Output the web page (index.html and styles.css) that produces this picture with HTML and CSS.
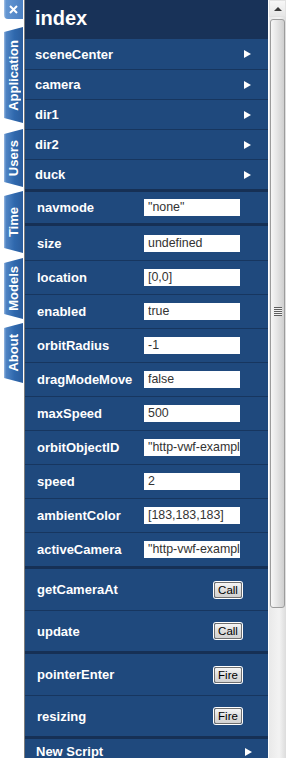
FILE: index.html
```html
<!DOCTYPE html>
<html lang="en">

<head>
    <meta charset="UTF-8">
    <meta name="viewport" content="width=device-width, initial-scale=1.0">
    <title>index</title>
    <link rel="stylesheet" href="styles.css">
</head>

<body>
    <div class="app">
        <nav class="tabs">
            <div class="tab tab-close">
                <svg width="9" height="9" viewBox="0 0 9 9">
                    <path d="M1 1 L8 8 M8 1 L1 8" stroke="#ffffff" stroke-width="2" fill="none" />
                </svg>
            </div>
            <div class="tab tab-application"><span>Application</span></div>
            <div class="tab tab-users"><span>Users</span></div>
            <div class="tab tab-time"><span>Time</span></div>
            <div class="tab tab-models"><span>Models</span></div>
            <div class="tab tab-about"><span>About</span></div>
        </nav>

        <main class="panel">
            <header class="panel-title">index</header>

            <section class="group">
                <div class="row nav-row"><span>sceneCenter</span><i class="arrow"></i></div>
                <div class="row nav-row"><span>camera</span><i class="arrow"></i></div>
                <div class="row nav-row"><span>dir1</span><i class="arrow"></i></div>
                <div class="row nav-row"><span>dir2</span><i class="arrow"></i></div>
                <div class="row nav-row"><span>duck</span><i class="arrow"></i></div>
            </section>

            <section class="group">
                <div class="row prop-row prop-first"><label>navmode</label><input type="text" value="&quot;none&quot;"></div>
            </section>

            <section class="group">
                <div class="row prop-row"><label>size</label><input type="text" value="undefined"></div>
                <div class="row prop-row"><label>location</label><input type="text" value="[0,0]"></div>
                <div class="row prop-row"><label>enabled</label><input type="text" value="true"></div>
                <div class="row prop-row"><label>orbitRadius</label><input type="text" value="-1"></div>
                <div class="row prop-row"><label>dragModeMove</label><input type="text" value="false"></div>
                <div class="row prop-row"><label>maxSpeed</label><input type="text" value="500"></div>
                <div class="row prop-row"><label>orbitObjectID</label><input type="text" value="&quot;http-vwf-example-com-camera&quot;"></div>
                <div class="row prop-row"><label>speed</label><input type="text" value="2"></div>
                <div class="row prop-row"><label>ambientColor</label><input type="text" value="[183,183,183]"></div>
                <div class="row prop-row"><label>activeCamera</label><input type="text" value="&quot;http-vwf-example-com-camera&quot;"></div>
            </section>

            <section class="group">
                <div class="row action-row"><span>getCameraAt</span><button>Call</button></div>
                <div class="row action-row"><span>update</span><button>Call</button></div>
            </section>

            <section class="group">
                <div class="row action-row"><span>pointerEnter</span><button>Fire</button></div>
                <div class="row action-row"><span>resizing</span><button>Fire</button></div>
            </section>

            <section class="group">
                <div class="row nav-row new-script"><span>New Script</span><i class="arrow"></i></div>
            </section>
        </main>

        <div class="scrollbar">
            <div class="scroll-up"><i class="scroll-tri"></i></div>
            <div class="scroll-thumb">
                <div class="grip"></div>
            </div>
        </div>
    </div>
</body>

</html>
```

FILE: styles.css
```css
:root {
    --header-color: #183258;
    --row-color: #1f497d;
    --line-color: #17365f;
    --group-line: #163055;
    --text-light: #ffffff;
    --input-text: #333333;
    --font-family: "Liberation Sans", Arial, sans-serif;
}

html,
body {
    margin: 0;
    padding: 0;
    background: #ffffff;
    overflow: hidden;
}

body {
    font-family: var(--font-family);
    width: 286px;
    height: 758px;
}

.app {
    display: flex;
    height: 758px;
}

/* Left tabs */

.tabs {
    width: 24px;
    flex: none;
    display: flex;
    flex-direction: column;
    align-items: flex-start;
}

.tab {
    width: 19px;
    margin-left: 4px;
    display: flex;
    align-items: center;
    justify-content: center;
    color: var(--text-light);
    font-size: 13px;
    font-weight: bold;
    background: linear-gradient(to right, #9ab9e0 0, #4f84c4 2px, #2f68ad 55%, #2a5c9c 100%);
    border-radius: 4px 0 0 4px;
    clip-path: polygon(0 5px, 100% 0, 100% 100%, 0 calc(100% - 5px));
}

.tab span {
    writing-mode: vertical-rl;
    transform: rotate(180deg);
    padding-left: 1px;
}

.tab-close {
    height: 19px;
    clip-path: none;
    border-radius: 0 0 0 4px;
    background: linear-gradient(to right, #a8c4e6 0, #6496d2 2px, #4b80c2 100%);
}

.tab-application {
    height: 96px;
    margin-top: 8px;
}

.tab-users {
    height: 58px;
    margin-top: 6px;
}

.tab-time {
    height: 62px;
    margin-top: 4px;
}

.tab-models {
    height: 61px;
    margin-top: 5px;
}

.tab-about {
    height: 60px;
    margin-top: 4px;
}

/* Panel */

.panel {
    width: 243px;
    flex: none;
    border-left: 1px solid #7d7d7d;
    background: var(--row-color);
    height: 758px;
    overflow: hidden;
}

.panel-title {
    height: 39px;
    background: var(--header-color);
    color: var(--text-light);
    font-size: 20px;
    font-weight: bold;
    padding-left: 10px;
    line-height: 36px;
    box-sizing: border-box;
}

.group + .group {
    border-top: 3px solid var(--group-line);
}

.row {
    display: flex;
    align-items: center;
    color: var(--text-light);
    font-size: 13px;
    font-weight: bold;
    box-sizing: border-box;
}

.row + .row {
    border-top: 1px solid var(--line-color);
}

.nav-row {
    height: 30px;
    padding: 0 17px 0 10px;
    justify-content: space-between;
}

.arrow {
    width: 0;
    height: 0;
    border-left: 7px solid #ffffff;
    border-top: 4px solid transparent;
    border-bottom: 4px solid transparent;
}

.new-script {
    height: 19px;
    padding: 5px 16px 0 11px;
    align-items: flex-start;
    line-height: 15px;
}

.new-script .arrow {
    margin-top: 4px;
}

.prop-row {
    height: 34px;
    padding-left: 12px;
}

.prop-first {
    height: 31px;
}

.prop-row label {
    width: 107px;
    flex: none;
    white-space: nowrap;
}

.prop-row input {
    width: 96px;
    height: 17px;
    box-sizing: border-box;
    border: none;
    margin: 0;
    padding: 0 0 0 4px;
    background: #ffffff;
    color: var(--input-text);
    font-family: var(--font-family);
    font-size: 12.4px;
    line-height: 17px;
    outline: none;
}

.action-row {
    height: 41px;
    padding: 0 26px 0 12px;
    justify-content: space-between;
}

.action-row button {
    width: 28px;
    height: 16px;
    margin: 0;
    padding: 0;
    border: 1px solid #6f6f6f;
    border-radius: 2px;
    box-shadow: 0 0 0 1px #ffffff;
    background: linear-gradient(#f6f6f6, #dedede 50%, #d2d2d2);
    color: #000000;
    font-family: var(--font-family);
    font-size: 11.5px;
    line-height: 14px;
}

/* Scrollbar */

.scrollbar {
    width: 18px;
    flex: none;
    height: 758px;
    box-sizing: border-box;
    border-left: 1px solid #ffffff;
    background: linear-gradient(to right, #e9e9e9, #f3f3f3 60%, #dcdcdc);
}

.scroll-up {
    height: 17px;
    display: flex;
    align-items: center;
    justify-content: center;
    box-sizing: border-box;
    border: 1px solid #e2e2e2;
    background: linear-gradient(#f7f7f7, #e6e6e6);
}

.scroll-tri {
    width: 0;
    height: 0;
    border-bottom: 4px solid #3a3a3a;
    border-left: 4px solid transparent;
    border-right: 4px solid transparent;
}

.scroll-thumb {
    margin: 2px 1px 0 1px;
    height: 589px;
    box-sizing: border-box;
    border: 1px solid #9c9c9c;
    border-radius: 3px;
    background: linear-gradient(to right, #f7f7f7, #e4e4e4 50%, #cfcfcf);
    display: flex;
    justify-content: center;
    padding-top: 287px;
}

.grip {
    width: 8px;
    height: 9px;
    background: repeating-linear-gradient(#5e5e5e 0, #5e5e5e 1px, #f2f2f2 1px, #f2f2f2 2px);
}
```
